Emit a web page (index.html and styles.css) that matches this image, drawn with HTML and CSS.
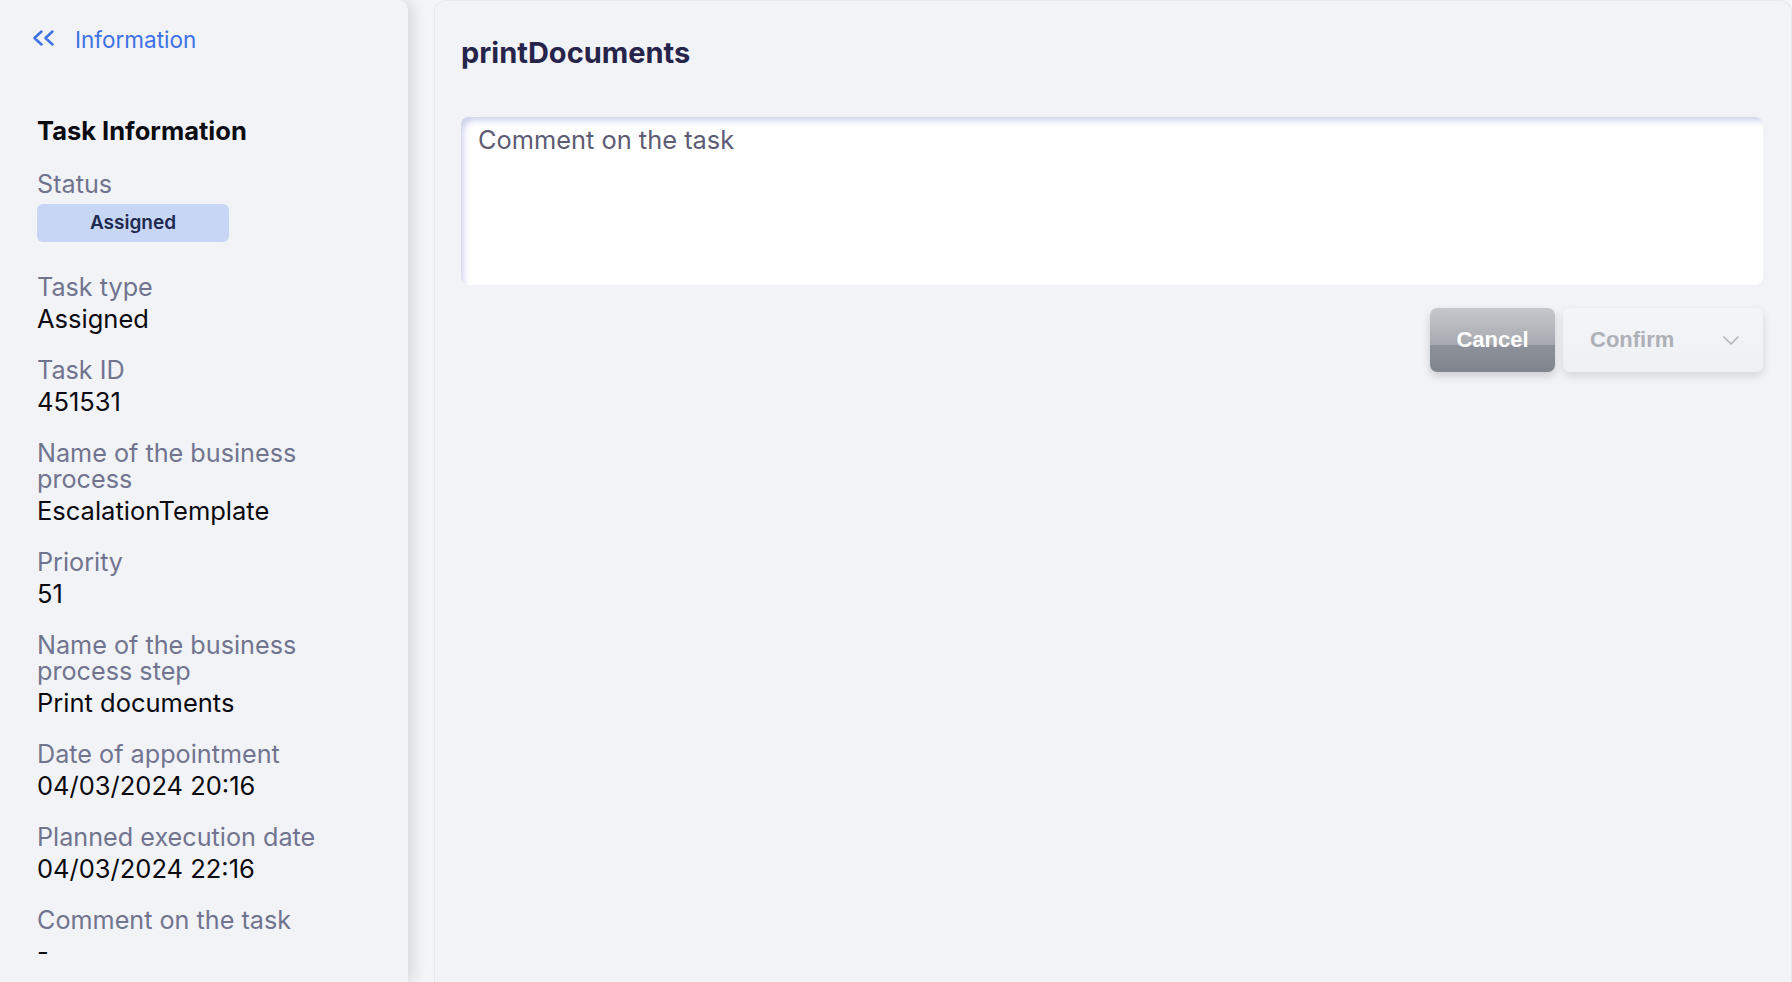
FILE: index.html
```html
<!DOCTYPE html>
<html lang="en">

<head>
    <meta charset="UTF-8">
    <meta name="viewport" content="width=device-width, initial-scale=1.0">
    <title>printDocuments</title>
    <link rel="stylesheet" href="styles.css">
</head>

<body>
    <!-- Sidebar with task info -->
    <aside class="sidebar">
        <a href="" class="backLink">
            <svg class="backIcon" width="23" height="16" viewBox="0 0 23 16">
                <path d="M9.5 1.5 L2.5 8 L9.5 14.5 M20.5 1.5 L13.5 8 L20.5 14.5" fill="none" stroke="#3d71e4" stroke-width="2.5" stroke-linecap="round" stroke-linejoin="round" />
            </svg>
            <span>Information</span>
        </a>

        <div class="taskInfo">
            <h2 class="infoTitle">Task Information</h2>

            <div class="infoItem">
                <div class="infoLabel">Status</div>
                <div class="statusBadge">Assigned</div>
            </div>
            <div class="infoItem">
                <div class="infoLabel">Task type</div>
                <div class="infoValue">Assigned</div>
            </div>
            <div class="infoItem">
                <div class="infoLabel">Task ID</div>
                <div class="infoValue">451531</div>
            </div>
            <div class="infoItem">
                <div class="infoLabel">Name of the business process</div>
                <div class="infoValue">EscalationTemplate</div>
            </div>
            <div class="infoItem">
                <div class="infoLabel">Priority</div>
                <div class="infoValue">51</div>
            </div>
            <div class="infoItem">
                <div class="infoLabel">Name of the business process step</div>
                <div class="infoValue">Print documents</div>
            </div>
            <div class="infoItem">
                <div class="infoLabel">Date of appointment</div>
                <div class="infoValue">04/03/2024 20:16</div>
            </div>
            <div class="infoItem">
                <div class="infoLabel">Planned execution date</div>
                <div class="infoValue">04/03/2024 22:16</div>
            </div>
            <div class="infoItem">
                <div class="infoLabel">Comment on the task</div>
                <div class="infoValue">-</div>
            </div>
        </div>
    </aside>

    <!-- Main task form -->
    <main class="taskPanel">
        <h1 class="taskTitle">printDocuments</h1>
        <textarea class="commentBox" placeholder="Comment on the task"></textarea>
        <div class="actions">
            <button class="btn btnCancel">Cancel</button>
            <button class="btn btnConfirm" disabled>
                <span>Confirm</span>
                <svg width="16" height="9" viewBox="0 0 16 9">
                    <path d="M1 1 L8 8 L15 1" fill="none" stroke="#b3b5bc" stroke-width="1.6" stroke-linecap="round" stroke-linejoin="round" />
                </svg>
            </button>
        </div>
    </main>
</body>

</html>
```

FILE: styles.css
```css
body {
    font-family: Inter, "Open Sans", sans-serif;
    margin: 0;
    padding: 0;
    height: 100vh;
    display: flex;
    overflow: hidden;
    background-color: #f4f5f7;
}

/* Sidebar */
.sidebar {
    width: 408px;
    flex-shrink: 0;
    box-sizing: border-box;
    background-color: #f2f3f7;
    border-top-right-radius: 10px;
    box-shadow: 6px 0 14px rgba(0, 0, 0, 0.11);
}

.backLink {
    display: flex;
    align-items: center;
    gap: 20px;
    padding: 26px 0 0 32px;
    color: #3d71e4;
    font-size: 22.5px;
    line-height: 28px;
    text-decoration: none;
}

.backIcon {
    margin-top: -4px;
}

.taskInfo {
    padding: 62px 0 0 37px;
}

.infoTitle {
    margin: 0 0 25px;
    font-size: 25.5px;
    line-height: 30px;
    font-weight: 700;
    color: #0b0b12;
}

.infoItem {
    padding: 0 40px 22px 0;
}

.infoLabel {
    font-size: 25.2px;
    line-height: 26px;
    color: #71748f;
}

.infoValue {
    padding-top: 3px;
    font-size: 25.5px;
    line-height: 32px;
    color: #0a0a0f;
}

.statusBadge {
    width: 192px;
    height: 38px;
    margin: 7px 0 10px;
    border-radius: 6px;
    background-color: #c8d6f6;
    color: #1e2a4f;
    font-size: 19px;
    font-weight: 600;
    line-height: 38px;
    text-align: center;
}

/* Main panel */
.taskPanel {
    flex: 1;
    margin-left: 26px;
    padding: 36px 28px 0 26px;
    background-color: #f2f3f7;
    border: 1px solid #e7e8ec;
    border-bottom: none;
    border-radius: 12px 12px 0 0;
}

.taskTitle {
    margin: 0 0 48px;
    font-size: 29px;
    line-height: 32px;
    font-weight: 700;
    color: #26244a;
}

.commentBox {
    display: block;
    width: 100%;
    height: 168px;
    box-sizing: border-box;
    padding: 9px 17px;
    border: none;
    border-radius: 8px;
    outline: none;
    resize: none;
    background-color: #fff;
    box-shadow: inset 5px 6px 7px -3px rgba(110, 122, 200, 0.38);
    font-family: Inter, "Open Sans", sans-serif;
    font-size: 25.4px;
    line-height: 28px;
    color: #222;
}

.commentBox::placeholder {
    color: #5d5c75;
}

.actions {
    display: flex;
    justify-content: flex-end;
    gap: 8px;
    margin-top: 23px;
}

.btn {
    height: 64px;
    border: none;
    border-radius: 7px;
    font-family: "Liberation Sans", Arial, sans-serif;
    font-size: 22px;
    font-weight: 700;
    cursor: pointer;
}

.btnCancel {
    width: 125px;
    color: #fff;
    background: linear-gradient(#c6c8cd, #a6a9af 58%, #8d9199 58%, #80848c);
    box-shadow: 0 4px 9px rgba(0, 0, 0, 0.16);
}

.btnConfirm {
    width: 200px;
    display: flex;
    align-items: center;
    justify-content: space-between;
    padding: 0 24px 0 27px;
    color: #aeb0b7;
    background: linear-gradient(#f4f5f8, #eff0f3);
    box-shadow: 0 4px 10px rgba(0, 0, 0, 0.12);
    cursor: default;
}
```
